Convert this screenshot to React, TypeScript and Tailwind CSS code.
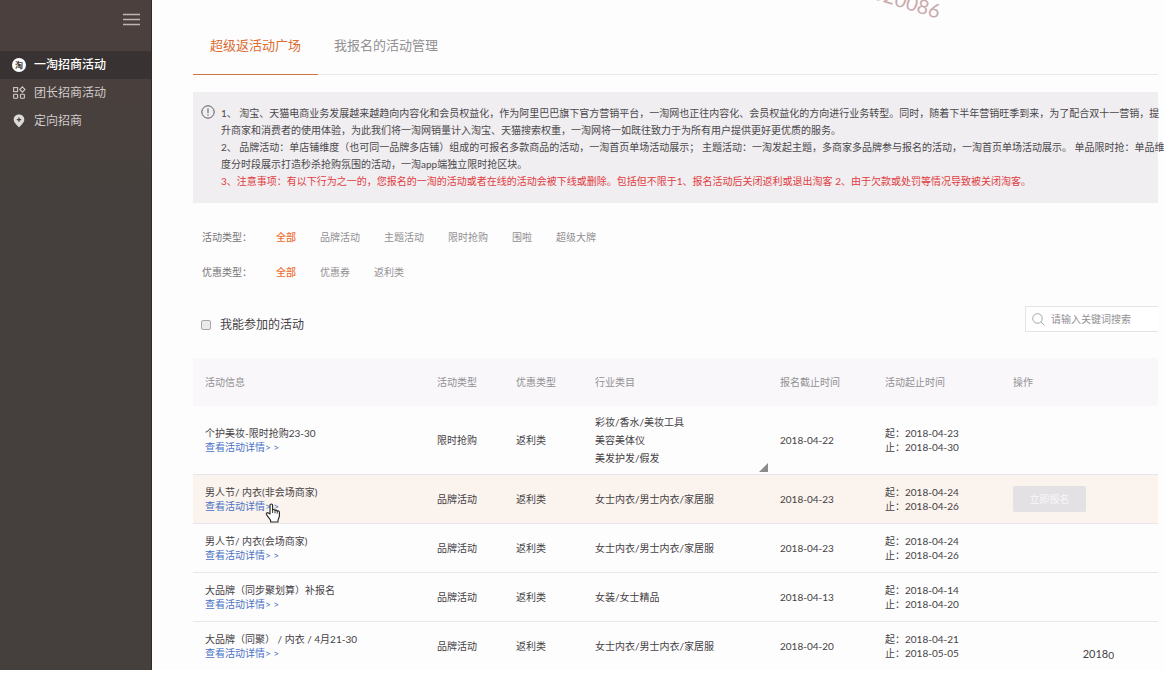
import React from "react"

const menuItems = [
  { label: "一淘招商活动", icon: "tao", active: true },
  { label: "团长招商活动", icon: "grid", active: false },
  { label: "定向招商", icon: "pin", active: false },
]

const filters = [
  { label: "活动类型：", options: ["全部", "品牌活动", "主题活动", "限时抢购", "围啦", "超级大牌"] },
  { label: "优惠类型：", options: ["全部", "优惠券", "返利类"] },
]

const rows = [
  {
    title: "个护美妆-限时抢购23-30",
    type: "限时抢购",
    benefit: "返利类",
    categories: ["彩妆/香水/美妆工具", "美容美体仪", "美发护发/假发"],
    more: true,
    deadline: "2018-04-22",
    start: "2018-04-23",
    end: "2018-04-30",
  },
  {
    title: "男人节/ 内衣(非会场商家)",
    type: "品牌活动",
    benefit: "返利类",
    categories: ["女士内衣/男士内衣/家居服"],
    hovered: true,
    deadline: "2018-04-23",
    start: "2018-04-24",
    end: "2018-04-26",
  },
  {
    title: "男人节/ 内衣(会场商家)",
    type: "品牌活动",
    benefit: "返利类",
    categories: ["女士内衣/男士内衣/家居服"],
    deadline: "2018-04-23",
    start: "2018-04-24",
    end: "2018-04-26",
  },
  {
    title: "大品牌（同步聚划算）补报名",
    type: "品牌活动",
    benefit: "返利类",
    categories: ["女装/女士精品"],
    deadline: "2018-04-13",
    start: "2018-04-14",
    end: "2018-04-20",
  },
  {
    title: "大品牌（同聚） / 内衣 / 4月21-30",
    type: "品牌活动",
    benefit: "返利类",
    categories: ["女士内衣/男士内衣/家居服"],
    deadline: "2018-04-20",
    start: "2018-04-21",
    end: "2018-05-05",
  },
]

function MenuIcon({ name }: { name: string }) {
  if (name === "tao") {
    return (
      <span className="flex h-[14px] w-[14px] items-center justify-center rounded-full bg-white text-[8px] leading-none font-bold text-[#3a3534]">
        淘
      </span>
    )
  }
  if (name === "grid") {
    return (
      <svg className="h-[14px] w-[14px]" viewBox="0 0 14 14" fill="none" stroke="#cfcaca" strokeWidth="1.1">
        <rect x="1.6" y="1.6" width="4" height="4" />
        <path d="M10.4 0.9 L13 3.5 L10.4 6.1 L7.8 3.5 Z" />
        <rect x="1.6" y="8.2" width="4" height="4" rx="0.8" />
        <rect x="8.4" y="8.2" width="4" height="4" rx="0.8" />
      </svg>
    )
  }
  return (
    <svg className="h-[14px] w-[14px]" viewBox="0 0 14 14">
      <path d="M7 0.5 C3.9 0.5 1.7 2.8 1.7 5.6 C1.7 8.8 5 11.2 7 13.5 C9 11.2 12.3 8.8 12.3 5.6 C12.3 2.8 10.1 0.5 7 0.5 Z" fill="#dedada" />
      <path d="M7 3.4 V7.8 M4.8 5.6 H9.2" stroke="#474140" strokeWidth="1.3" />
    </svg>
  )
}

function HandCursor() {
  return (
    <svg className="pointer-events-none absolute top-1 left-[60px] h-[20px] w-[16px]" viewBox="0 0 16 20">
      <path
        d="M5 11 V2.3 C5 0.5 7.6 0.5 7.6 2.3 V7 C7.9 6.2 9.8 6.3 10 7.5 C10.5 6.8 12 7 12.2 8.2 C13 7.6 14.4 8 14.4 9.4 V13 C14.4 15 13 16 13 17.5 V19 H5.6 V17.5 C5 15.5 2.8 14 1.5 11.4 C0.9 9.9 2.4 9.2 3.3 10.1 Z"
        fill="#fff"
        stroke="#222"
        strokeWidth="1.1"
        strokeLinejoin="round"
      />
      <path d="M7.6 7 V10 M10 7.5 V10.4 M12.2 8.2 V10.6" stroke="#222" strokeWidth="0.9" />
    </svg>
  )
}

function Sidebar() {
  return (
    <aside className="flex w-[152px] shrink-0 flex-col border-r border-[#2f2b2b] bg-[#45403d] bg-linear-to-b from-[#4c403e] to-[#45403d] to-30%">
      <div className="flex justify-end px-[11px] pt-3">
        <button type="button" aria-label="菜单">
          <svg className="h-[15px] w-[17px]" viewBox="0 0 17 15" stroke="#bdb5b4" strokeWidth="1.3">
            <path d="M0 2.5 H17 M0 7.5 H17 M0 12.5 H17" />
          </svg>
        </button>
      </div>
      <nav className="mt-6 flex flex-col text-[12px]">
        {menuItems.map((item) => (
          <a
            key={item.label}
            href="#"
            className={`flex h-7 items-center gap-2 pl-3 ${item.active ? "bg-[#383332] font-medium text-white" : "text-[#cfcaca]"}`}
          >
            <MenuIcon name={item.icon} />
            {item.label}
          </a>
        ))}
      </nav>
    </aside>
  )
}

function Notice() {
  return (
    <section className="mt-[17px] flex gap-1.5 bg-[#f0eef1] py-[13px] pl-2 text-[#4b484b]">
      <svg className="h-[14px] w-[14px] shrink-0" viewBox="0 0 14 14" fill="none" stroke="#5a575a">
        <circle cx="7" cy="7" r="6.2" />
        <path d="M7 3.4 V8.2 M7 9.4 V10.6" />
      </svg>
      <div className="leading-[17px] whitespace-nowrap">
        <p>
          1、 淘宝、天猫电商业务发展越来越趋向内容化和会员权益化，作为阿里巴巴旗下官方营销平台，一淘网也正往内容化、会员权益化的方向进行业务转型。同时，随着下半年营销旺季到来，为了配合双十一营销，提
          <br />
          升商家和消费者的使用体验，为此我们将一淘网销量计入淘宝、天猫搜索权重，一淘网将一如既往致力于为所有用户提供更好更优质的服务。
        </p>
        <p>
          2、 品牌活动：单店铺维度（也可同一品牌多店铺）组成的可报名多款商品的活动，一淘首页单场活动展示； 主题活动：一淘发起主题，多商家多品牌参与报名的活动，一淘首页单场活动展示。 单品限时抢：单品维
          <br />
          度分时段展示打造秒杀抢购氛围的活动，一淘app端独立限时抢区块。
        </p>
        <p className="text-[#e03c40]">
          3、注意事项：有以下行为之一的，您报名的一淘的活动或者在线的活动会被下线或删除。包括但不限于1、报名活动后关闭返利或退出淘客 2、由于欠款或处罚等情况导致被关闭淘客。
        </p>
      </div>
    </section>
  )
}

function ActivityTable() {
  return (
    <table className="mt-[26px] w-full table-fixed text-left">
      <colgroup>
        <col className="w-[232px]" />
        <col className="w-[79px]" />
        <col className="w-[79px]" />
        <col className="w-[185px]" />
        <col className="w-[105px]" />
        <col className="w-[128px]" />
        <col />
      </colgroup>
      <thead className="bg-[#f9f7fa] text-[#929092]">
        <tr className="h-12">
          {["活动信息", "活动类型", "优惠类型", "行业类目", "报名截止时间", "活动起止时间", "操作"].map((head) => (
            <th key={head} className="pl-3 font-normal">
              {head}
            </th>
          ))}
        </tr>
      </thead>
      <tbody className="text-[#444144]">
        {rows.map((row) => (
          <tr key={row.title} className={`h-[49px] border-b border-[#e9e6ea] ${row.hovered ? "bg-[#fbf3ed]" : ""}`}>
            <td className="pl-3 leading-[14px]">
              <div>{row.title}</div>
              <div className="relative">
                <a href="#" className="text-[#4a72c4]">
                  查看活动详情&gt;&nbsp;&gt;
                </a>
                {row.hovered && <HandCursor />}
              </div>
            </td>
            <td className="pl-3">{row.type}</td>
            <td className="pl-3">{row.benefit}</td>
            <td className="relative py-[7px] pl-3 leading-[18px]">
              {row.categories.map((category) => (
                <div key={category}>{category}</div>
              ))}
              {row.more && (
                <svg className="absolute right-0 bottom-0.5 h-[9px] w-[9px]" viewBox="0 0 9 9">
                  <path d="M9 0 V9 H0 Z" fill="#8d8b8d" />
                </svg>
              )}
            </td>
            <td className="pl-3">{row.deadline}</td>
            <td className="pl-3 leading-[14px]">
              <div>起：{row.start}</div>
              <div>止：{row.end}</div>
            </td>
            <td className="pl-3">
              {row.hovered && (
                <button type="button" disabled className="h-[26px] w-[73px] rounded-xs bg-[#e4e1e5] text-[#f8f6f9]">
                  立即报名
                </button>
              )}
            </td>
          </tr>
        ))}
      </tbody>
    </table>
  )
}

export default function App() {
  return (
    <div className="relative flex h-screen overflow-hidden bg-white pb-1.5 font-[Lato,'Noto_Sans_CJK_SC',sans-serif] text-[10px]">
      <Sidebar />
      <main className="min-w-0 flex-1 overflow-hidden bg-[#fefdfe] pr-1.5 pl-[41px]">
        <div className="flex border-b border-[#ebe8eb] pt-[18px] text-[13px]">
          <button type="button" className="-mb-px h-[57px] border-b border-[#cf7440] px-[17px] text-[#dc6c31]">
            超级返活动广场
          </button>
          <button type="button" className="px-4 text-[#929092]">
            我报名的活动管理
          </button>
        </div>

        <Notice />

        <div className="mt-6 flex flex-col gap-[15px] pl-[9px]">
          {filters.map((filter) => (
            <div key={filter.label} className="flex h-5 items-center gap-6">
              <span className="text-[#777477]">{filter.label}</span>
              {filter.options.map((option, index) => (
                <button key={option} type="button" className={index === 0 ? "font-medium text-[#ee6f31]" : "text-[#929092]"}>
                  {option}
                </button>
              ))}
            </div>
          ))}
        </div>

        {/* Eligible-only toggle and search */}
        <div className="mt-6 flex h-[26px] items-center justify-between">
          <label className="flex items-center gap-[9px] pt-3 pl-2 text-[12px] text-[#444144]">
            <input
              type="checkbox"
              className="h-[10px] w-[10px] appearance-none rounded-xs border border-[#a9a6a9] bg-[#ebe9eb]"
            />
            我能参加的活动
          </label>
          <div className="flex h-full w-[133px] items-center gap-1.5 border-y border-l border-[#e6e3e7] bg-white pl-1.5">
            <svg className="h-[13px] w-[13px] shrink-0" viewBox="0 0 13 13" fill="none" stroke="#a9a6a9">
              <circle cx="5.5" cy="5.5" r="4.8" />
              <path d="M9 9 L12.5 12.5" />
            </svg>
            <input
              type="text"
              aria-label="请输入关键词搜索"
              placeholder="请输入关键词搜索"
              className="w-full min-w-0 outline-none placeholder:text-[#929092]"
            />
          </div>
        </div>

        <ActivityTable />
      </main>

      {/* Watermarks */}
      <span className="pointer-events-none absolute -top-[11px] right-[222px] rotate-[17deg] text-[20px] leading-6 text-[#c9abac]">
        020086
      </span>
      <span className="pointer-events-none absolute right-[50px] bottom-[15px] flex items-end text-[11px] leading-[14px] text-[#444144]">
        2018<span className="-mb-px text-[10px]">0</span>
      </span>
    </div>
  )
}
